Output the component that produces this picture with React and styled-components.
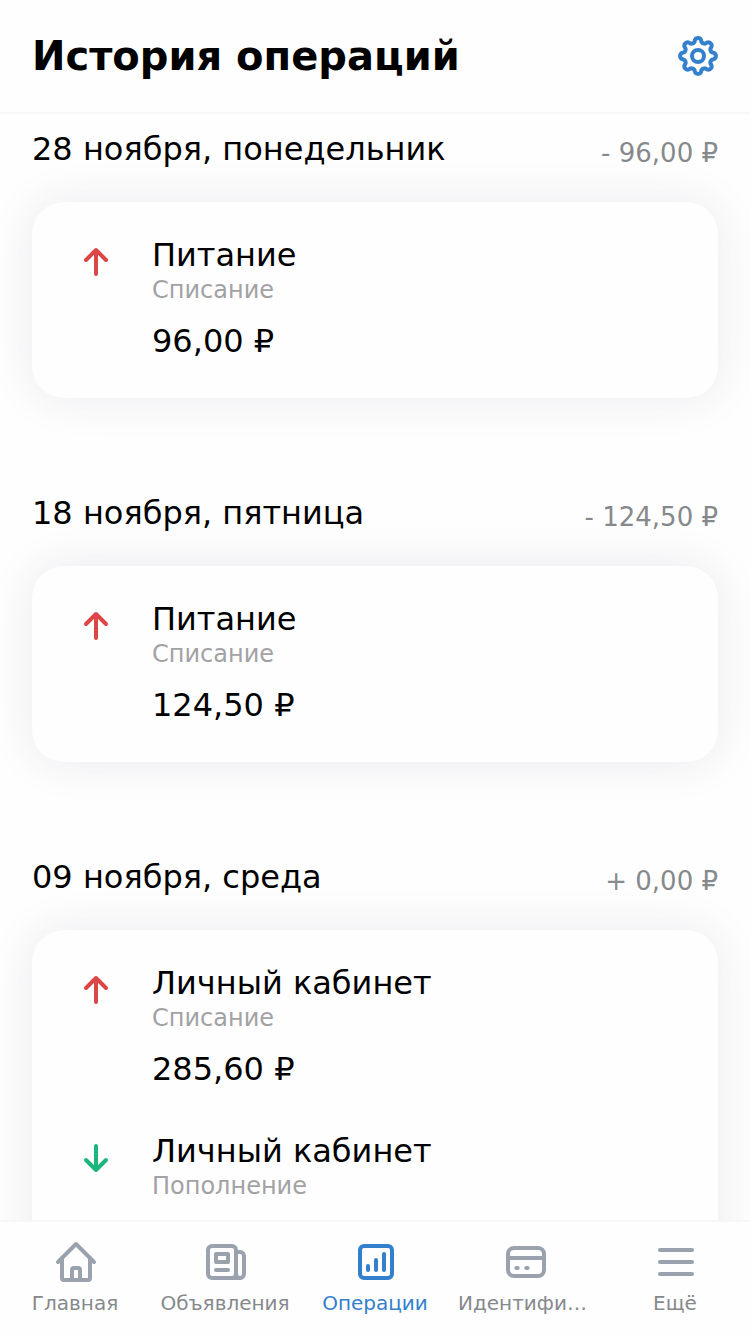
import React from 'react';
import styled, { createGlobalStyle } from 'styled-components';

const Colors = {
  white: '#fefefe',
  black: '#000000',
  blue: '#3380cc',
  red: '#dc4646',
  green: '#1cb57c',
  gray: '#86898c',
  grayLight: '#a2a2a5',
  icon: '#99a2ad',
  line: '#f7f7f8',
};

const GlobalStyle = createGlobalStyle`
  * {
    box-sizing: border-box;
  }

  body {
    margin: 0;
    background-color: ${Colors.white};
    color: ${Colors.black};
    font-family: "DejaVu Sans", sans-serif;
  }
`;

const Page = styled.div`
  display: flex;
  flex-direction: column;
  height: 100vh;
  overflow: hidden;
`;

/* HEADER block */
const Header = styled.header`
  flex: none;
  display: flex;
  align-items: center;
  justify-content: space-between;
  height: 114px;
  padding: 0 28px 0 32px;
  border-bottom: 2px solid ${Colors.line};
`;

const Title = styled.h1`
  margin: 0;
  font-size: 40px;
  line-height: 48px;
  font-weight: 700;
`;

const SettingsButton = styled.button`
  display: flex;
  padding: 0;
  border: none;
  background: none;
  color: ${Colors.blue};
`;

/* HISTORY block */
const History = styled.main`
  flex: 1;
  min-height: 0;
  overflow: hidden;
`;

const Day = styled.section`
  padding: 0 32px 80px;
`;

const DayHeader = styled.div`
  display: flex;
  align-items: baseline;
  justify-content: space-between;
  height: 88px;
  padding-top: 16px;
`;

const DayName = styled.span`
  font-size: 32px;
  line-height: 38px;
`;

const DayTotal = styled.span`
  position: relative;
  top: 2px;
  font-size: 26px;
  line-height: 32px;
  color: ${Colors.gray};
`;

const Card = styled.div`
  display: flex;
  flex-direction: column;
  row-gap: 44px;
  padding: 34px 40px 38px;
  border-radius: 32px;
  background-color: ${Colors.white};
  box-shadow: 0 0 44px rgba(60, 35, 85, 0.1);
`;

const Operation = styled.div`
  display: flex;
  column-gap: 32px;
  min-height: 124px;
`;

const Direction = styled.div`
  height: 48px;
  margin-top: 2px;
  color: ${props => props.$income ? Colors.green : Colors.red};
`;

const OperationInfo = styled.div`
  display: flex;
  flex-direction: column;
`;

const OperationName = styled.span`
  font-size: 32px;
  line-height: 38px;
`;

const OperationType = styled.span`
  margin-bottom: 16px;
  font-size: 24px;
  line-height: 32px;
  color: ${Colors.grayLight};
`;

/* TAB BAR block */
const TabBar = styled.nav`
  flex: none;
  display: grid;
  grid-template-columns: repeat(5, 1fr);
  height: 114px;
  border-top: 2px solid ${Colors.line};
  background-color: ${Colors.white};
`;

const Tab = styled.div`
  display: flex;
  flex-direction: column;
  align-items: center;
  padding-top: 16px;
  color: ${props => props.$active ? Colors.blue : Colors.icon};
`;

const TabIcon = styled.div`
  height: 48px;
  padding-left: 2px;
`;

const TabLabel = styled.span`
  width: ${props => props.$wide ? "134px" : "auto"};
  margin-top: 5px;
  font-size: 20px;
  line-height: 24px;
  white-space: nowrap;
  color: ${props => props.$active ? Colors.blue : Colors.gray};
`;

const Svg = styled.svg`
  display: block;
  width: 48px;
  height: 48px;
  fill: none;
  stroke: currentColor;
  stroke-width: 4px;
  stroke-linecap: round;
  stroke-linejoin: round;
`;

const Icon = ({ children }) => <Svg viewBox="0 0 48 48">{children}</Svg>;

// gear outline: 8 teeth, arcs alternate outwards and inwards
const gearPath = () => {
  const point = i => {
    const a = ((i * 22.5 - 11.25) * Math.PI) / 180;
    return `${(24 + 16.1 * Math.sin(a)).toFixed(2)} ${(24 - 16.1 * Math.cos(a)).toFixed(2)}`;
  };
  let d = `M${point(0)}`;
  for (let i = 1; i <= 16; i++) {
    d += `A3.4 3.4 0 0 ${i % 2} ${point(i)}`;
  }
  return d + 'Z';
};

const GearIcon = () => (
  <Icon>
    <path d={gearPath()} />
    <circle cx="24" cy="24" r="6" />
  </Icon>
);

const ArrowUpIcon = () => (
  <Icon>
    <path d="M24 36V12M14 22l10-10 10 10" />
  </Icon>
);

const ArrowDownIcon = () => (
  <Icon>
    <path d="M24 12v24M14 26l10 10 10-10" />
  </Icon>
);

const HomeIcon = () => (
  <Icon>
    <path d="M6 24L24 6l18 18" />
    <path d="M10 21v19a2 2 0 0 0 2 2h24a2 2 0 0 0 2-2V21" />
    <path d="M20 41V32a2 2 0 0 1 2-2h4a2 2 0 0 1 2 2v9" />
  </Icon>
);

const NewsIcon = () => (
  <Icon>
    <rect x="6" y="8" width="28" height="32" rx="4" />
    <path d="M34 14h4a4 4 0 0 1 4 4v18a4 4 0 0 1-4 4h-8" />
    <path d="M34 14v22a4 4 0 0 0 4 4" />
    <rect x="14" y="16" width="12" height="8" />
    <path d="M14 32h12" />
  </Icon>
);

const ChartIcon = () => (
  <Icon>
    <rect x="8" y="8" width="32" height="32" rx="4" />
    <path d="M16 28v4M24 22v10M32 16v16" />
  </Icon>
);

const PassIcon = () => (
  <Icon>
    <rect x="6" y="10" width="36" height="28" rx="6" />
    <path d="M6 20h36M14.3 30h1.4M24.2 30h1.4" />
  </Icon>
);

const MenuIcon = () => (
  <Icon>
    <path d="M8 12h32M8 24h32M8 36h32" />
  </Icon>
);

const days = [
  {
    name: '28 ноября, понедельник',
    total: '- 96,00 ₽',
    operations: [{ name: 'Питание', type: 'Списание', sum: '96,00 ₽' }],
  },
  {
    name: '18 ноября, пятница',
    total: '- 124,50 ₽',
    operations: [{ name: 'Питание', type: 'Списание', sum: '124,50 ₽' }],
  },
  {
    name: '09 ноября, среда',
    total: '+ 0,00 ₽',
    operations: [
      { name: 'Личный кабинет', type: 'Списание', sum: '285,60 ₽' },
      { name: 'Личный кабинет', type: 'Пополнение', income: true },
    ],
  },
];

const tabs = [
  { label: 'Главная', icon: <HomeIcon /> },
  { label: 'Объявления', icon: <NewsIcon /> },
  { label: 'Операции', icon: <ChartIcon />, active: true },
  { label: 'Идентифи…', icon: <PassIcon />, wide: true },
  { label: 'Ещё', icon: <MenuIcon /> },
];

const App = () => {
  return (
    <Page>
      <GlobalStyle />
      <Header>
        <Title>История операций</Title>
        <SettingsButton>
          <GearIcon />
        </SettingsButton>
      </Header>
      <History>
        {days.map(day => (
          <Day key={day.name}>
            <DayHeader>
              <DayName>{day.name}</DayName>
              <DayTotal>{day.total}</DayTotal>
            </DayHeader>
            <Card>
              {day.operations.map(operation => (
                <Operation key={operation.type}>
                  <Direction $income={operation.income}>
                    {operation.income ? <ArrowDownIcon /> : <ArrowUpIcon />}
                  </Direction>
                  <OperationInfo>
                    <OperationName>{operation.name}</OperationName>
                    <OperationType>{operation.type}</OperationType>
                    {operation.sum && <OperationName>{operation.sum}</OperationName>}
                  </OperationInfo>
                </Operation>
              ))}
            </Card>
          </Day>
        ))}
      </History>
      <TabBar>
        {tabs.map(tab => (
          <Tab key={tab.label} $active={tab.active}>
            <TabIcon>{tab.icon}</TabIcon>
            <TabLabel $active={tab.active} $wide={tab.wide}>{tab.label}</TabLabel>
          </Tab>
        ))}
      </TabBar>
    </Page>
  )
};

export default App;
